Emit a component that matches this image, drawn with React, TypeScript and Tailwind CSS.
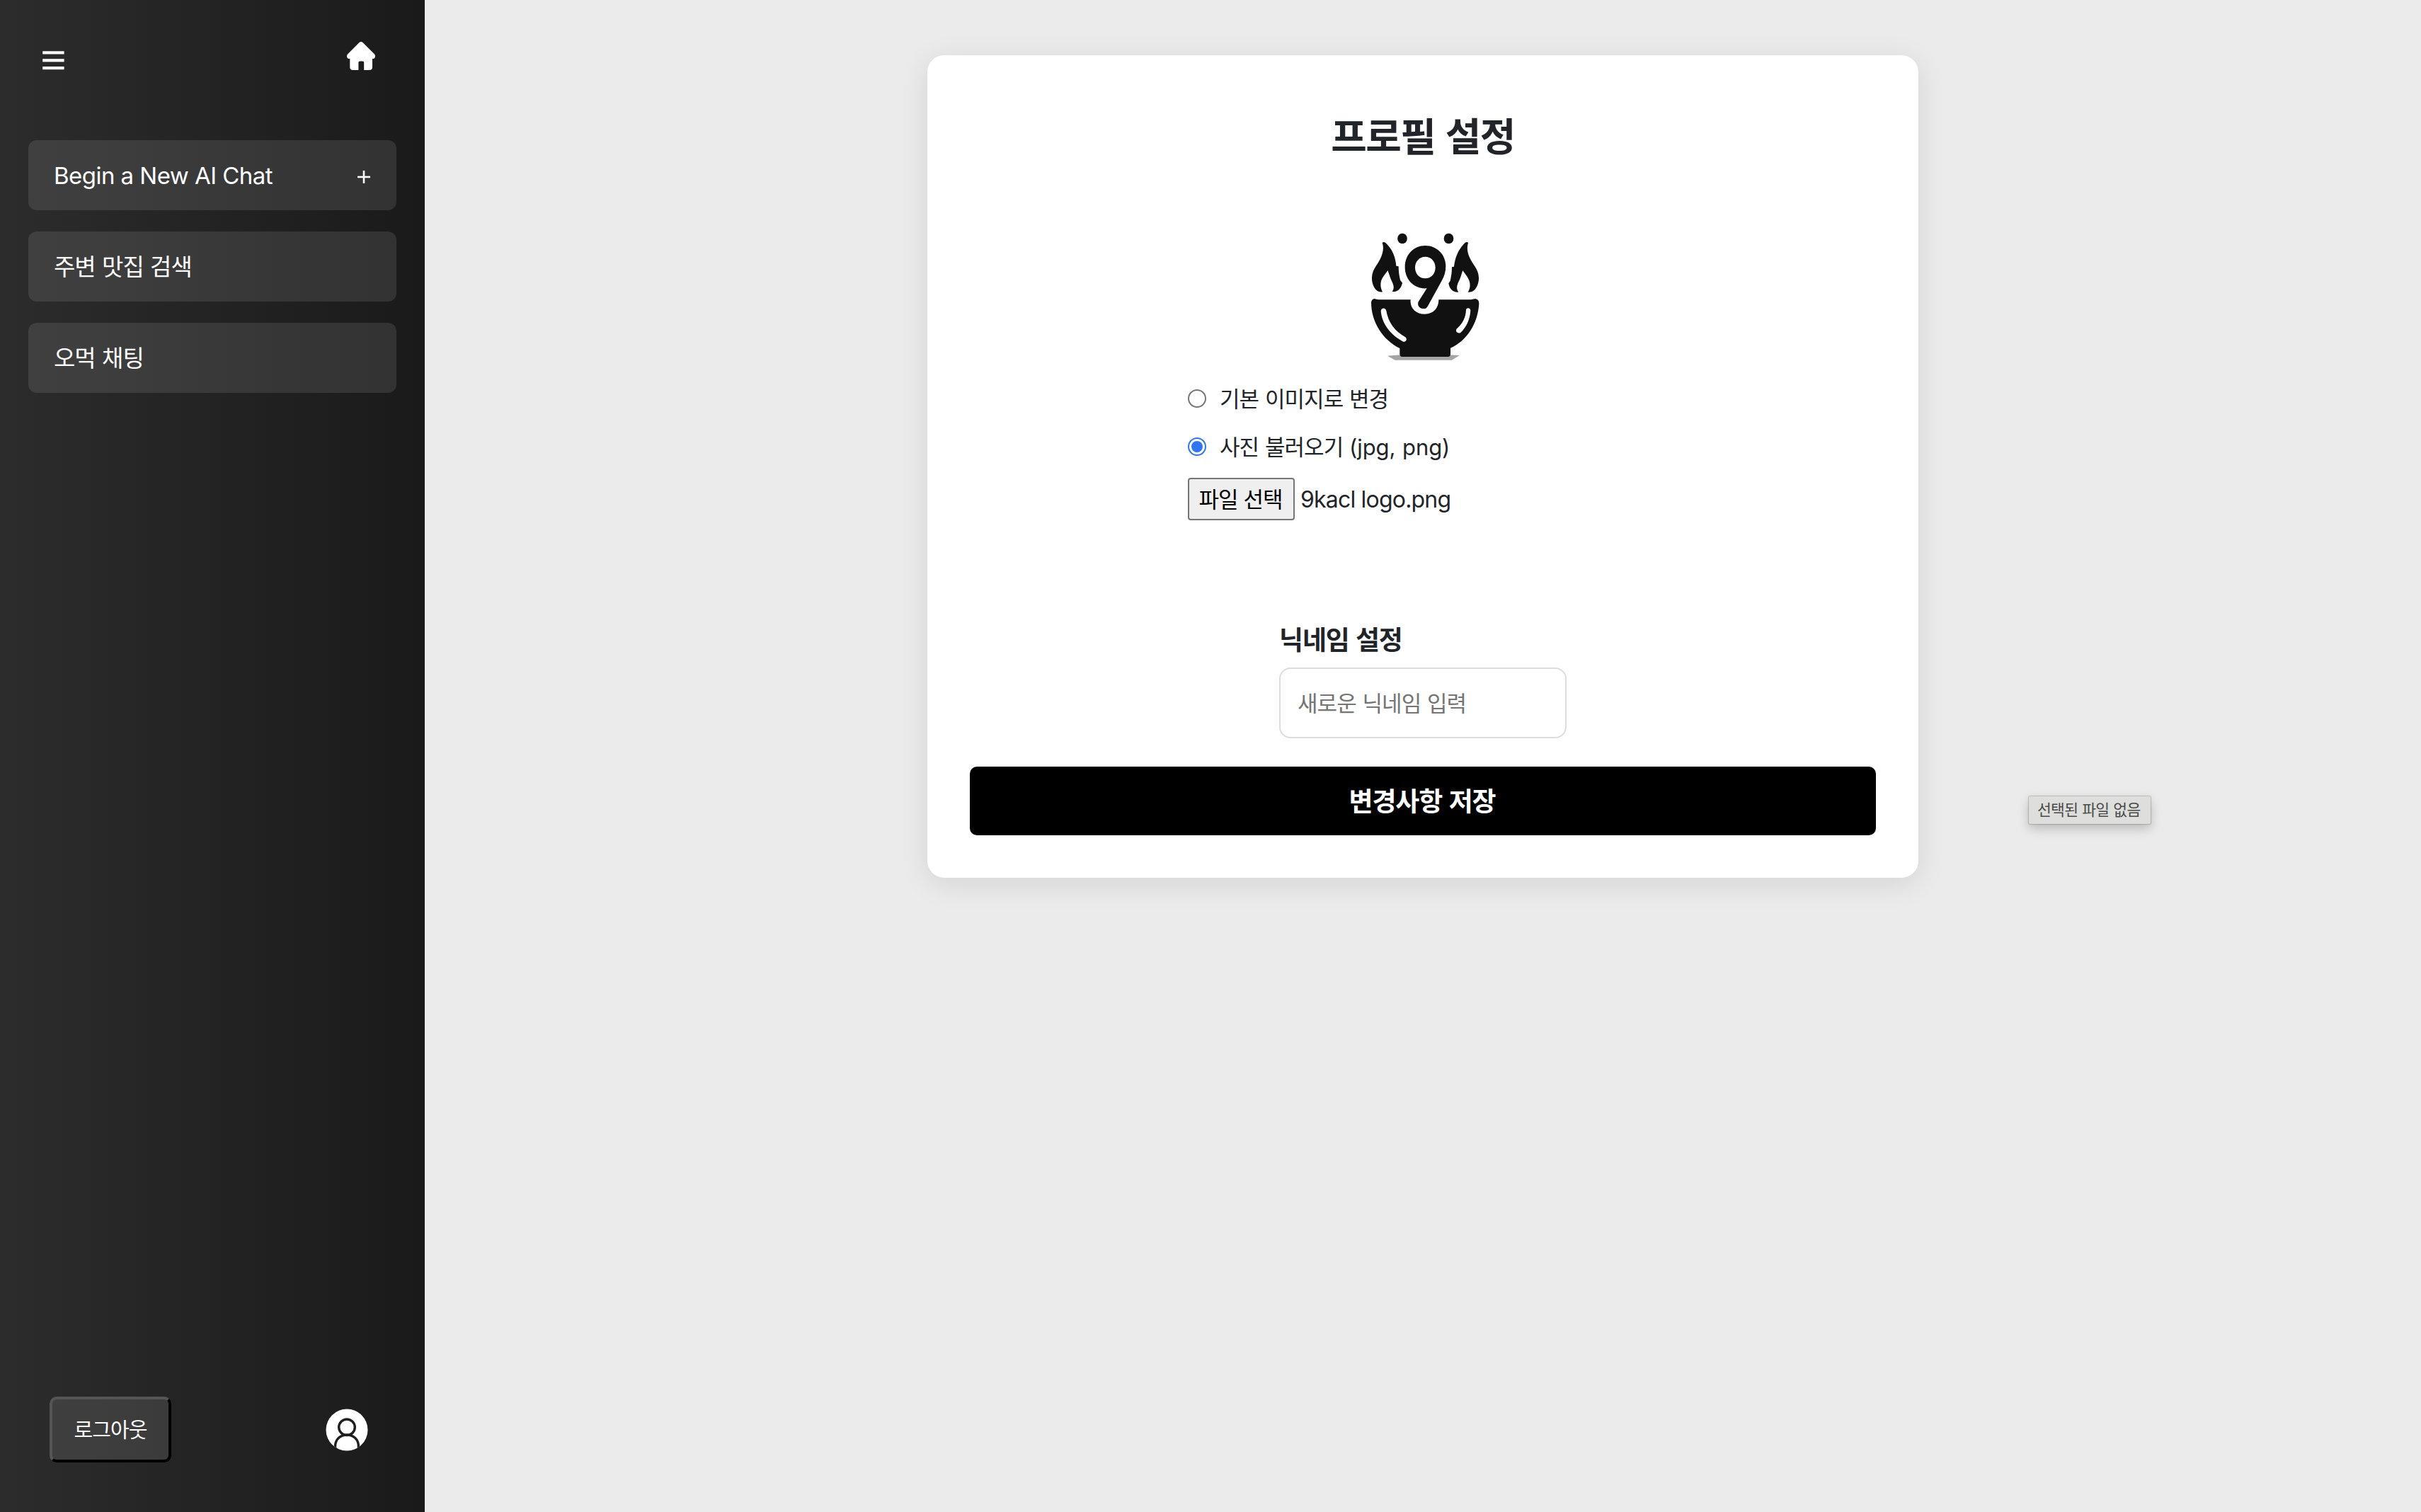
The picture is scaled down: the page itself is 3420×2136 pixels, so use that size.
import React from "react";

function MenuIcon() {
  return (
    <svg width="31" height="28" viewBox="0 0 31 28" fill="#fff">
      <rect x="0.2" y="0.3" width="30.4" height="4.2" />
      <rect x="0.2" y="11.2" width="30.4" height="4.2" />
      <rect x="0.2" y="22" width="30.4" height="4.2" />
    </svg>
  );
}

function HomeIcon() {
  return (
    <svg width="40" height="40" viewBox="0 0 40 40" fill="#fff">
      <path d="M17.6 1.1 Q20 -0.9 22.4 1.1 L39 17.6 Q40 18.8 40 20.4 Q40 24 36 24 L36 36 Q36 40 32 40 L24.2 40 L24.2 29.5 Q24.2 27.6 22.4 27.6 L18.2 27.6 Q16.4 27.6 16.4 29.5 L16.4 40 L8.5 40 Q4.3 40 4.3 36 L4.3 24 Q0 24 0 20.4 Q0 18.8 1.1 17.6 Z" />
    </svg>
  );
}

function UserIcon() {
  return (
    <svg width="60" height="60" viewBox="0 0 60 60">
      <defs>
        <clipPath id="avatar-disc">
          <circle cx="30" cy="30" r="29.5" />
        </clipPath>
      </defs>
      <circle cx="30" cy="30" r="29.5" fill="#fff" />
      <g clipPath="url(#avatar-disc)" fill="none" stroke="#1f1f1f" strokeWidth="3.4">
        <circle cx="30" cy="26.3" r="11.3" />
        <path d="M13.6 58 V53 C13.6 43 21 37 30 37 C39 37 46.4 43 46.4 53 V58" />
      </g>
    </svg>
  );
}

function BowlLogo() {
  return (
    <svg width="240" height="240" viewBox="0 0 720 720" fill="#111">
      <path d="M180 608 L236 604 H440 L486 606 L452 626 H212 Z" fill="#a5a3a4" />
      <ellipse cx="243" cy="111" rx="20.5" ry="22" />
      <ellipse cx="439.5" cy="111" rx="20.5" ry="22" />
      <path d="M158 129 C164 122 172 128 180 137 C203 162 214 191 217 227 L227 229 C227 249 229 266 234 287 L243 299 C238 322 224 338 200 336 C210 322 207 309 198 291 C190 276 188 262 181 246 C173 260 160 271 153 291 C149 309 152 323 159 337 C132 343 113 309 114 277 C115 239 141 221 154 187 C163 164 164 146 158 129 Z" />
      <path d="M522 129 C516 122 508 128 501 137 C478 162 466 194 462 230 L453 232 C453 252 451 269 446 290 L439 301 C443 326 459 341 481 338 C471 324 473 310 483 291 C491 276 493 262 499 246 C507 260 520 271 527 291 C532 309 530 324 521 338 C549 343 568 309 567 277 C566 239 540 221 526 187 C517 164 517 146 522 129 Z" />
      <path
        fillRule="evenodd"
        d="M340 141 C390 141 427 180 427 229 C427 252 421 270 411 288 L352 395 C346 406 341 409 332 408 C316 408 305 395 311 379 L347 322 C294 327 254 286 254 232 C254 180 291 141 340 141 Z M340 188 C315 188 297 208 297 234 C297 260 315 280 340 280 C365 280 383 260 383 234 C383 208 365 188 340 188 Z"
      />
      <path
        fillRule="evenodd"
        d="M124 366 Q133 369 142 370 L278 370 C274 405 300 431 338 431 C376 431 397 405 397 370 H534 L552 366 Q568 368 568 386 C564 470 516 545 447 575 V600 Q447 612 436 612 H243 Q232 612 232 600 V576 C160 540 112 466 111 383 Q111 370 124 366 Z M152 418 C156 472 193 520 247 548 C260 551 265 536 256 529 C213 505 183 467 175 417 C172 402 153 403 152 418 Z M513 413 C512 446 498 471 474 493 C465 505 478 516 490 510 C514 487 530 455 532 415 C530 403 515 403 513 413 Z"
      />
    </svg>
  );
}

function SideItem({ children, plus }: { children: React.ReactNode; plus?: boolean }) {
  return (
    <div className="flex h-[99px] items-center justify-between rounded-xl bg-white/10 pl-[36px] pr-[37px]">
      {children}
      {plus && (
        <svg width="18" height="18" viewBox="0 0 18 18" className="mt-[5px]" fill="#fff">
          <rect x="0" y="7.7" width="18" height="2.6" />
          <rect x="7.7" y="0" width="2.6" height="18" />
        </svg>
      )}
    </div>
  );
}

function Radio({ checked }: { checked?: boolean }) {
  return checked ? (
    <span className="flex size-[26px] items-center justify-center rounded-full border-2 border-[#3075f6]">
      <span className="size-[16px] rounded-full bg-[#3075f6]" />
    </span>
  ) : (
    <span className="size-[26px] rounded-full border-2 border-[#767676]" />
  );
}

export default function App() {
  return (
    <div className="relative flex h-[2136px] w-[3420px] overflow-hidden bg-[#ebebeb] font-['Inter','Noto_Sans_CJK_KR',sans-serif] text-[#212529]">
      <aside className="flex w-[600px] shrink-0 flex-col bg-[linear-gradient(90deg,#2c2c2c,#1a1a1a)] px-[40px] text-white">
        <div className="flex h-[198px] items-start justify-between pl-[20px] pr-[30px] pt-[59px]">
          <div className="pt-[13px]">
            <MenuIcon />
          </div>
          <HomeIcon />
        </div>
        <nav className="flex flex-col gap-[30px]">
          <SideItem plus>
            <span className="whitespace-nowrap pt-[2px] text-[33px] tracking-[-0.54px]">Begin a New AI Chat</span>
          </SideItem>
          <SideItem>
            <span className="whitespace-nowrap text-[33px] leading-[40px] tracking-[-0.03em] [word-spacing:0.03em]">주변 맛집 검색</span>
          </SideItem>
          <SideItem>
            <span className="whitespace-nowrap text-[33px] leading-[40px] tracking-[-0.03em] [word-spacing:0.03em]">오먹 채팅</span>
          </SideItem>
        </nav>
        <div className="mt-auto mb-[70px] flex items-center justify-between pl-[30px] pr-[40px]">
          <button className="flex h-[93px] w-[172px] items-center justify-center rounded-[10px] border-4 border-t-[#555] border-l-[#555] border-r-black border-b-black bg-white/10 pt-[2px] text-[29px] leading-[40px] tracking-[-0.03em]">
            로그아웃
          </button>
          <UserIcon />
        </div>
      </aside>

      <main className="flex flex-1 items-start justify-center pt-[78px]">
        <section className="flex h-[1162px] w-[1400px] flex-col items-center rounded-3xl bg-white px-[60px] shadow-[0_8px_40px_rgba(0,0,0,0.1)]">
          <h1 className="mt-[81px] h-[68px] whitespace-nowrap text-[55px] leading-[68px] font-bold tracking-[-0.028em] [word-spacing:0.05em]">프로필 설정</h1>
          <div className="mt-[73px] ml-[20px] h-[240px]">
            <BowlLogo />
          </div>
          <div className="mt-[-3px] w-[664px]">
            <label className="flex h-[52px] items-center gap-[19px]">
              <Radio />
              <span className="whitespace-nowrap pt-[2px] text-[31px] leading-[48px] tracking-[-0.03em] [word-spacing:0.03em]">기본 이미지로 변경</span>
            </label>
            <label className="mt-[16px] flex h-[52px] items-center gap-[19px]">
              <Radio checked />
              <span className="whitespace-nowrap pt-[2px] text-[31px] leading-[48px] tracking-[-0.03em] [word-spacing:0.03em]">
                사진 불러오기 <span className="tracking-[-0.002em]">(jpg, png)</span>
              </span>
            </label>
            <div className="mt-[18px] flex h-[60px] items-center gap-[8px]">
              <button className="flex h-[60px] w-[151px] items-center justify-center rounded-[4px] border-2 border-[#767676] bg-[#efefef] pt-[2px] pr-[2px] text-[31px] leading-[48px] tracking-[-0.03em] text-black">
                파일 선택
              </button>
              <span className="whitespace-nowrap pt-[2px] text-[32px] leading-[48px] tracking-[-0.025em]">9kacl logo.png</span>
            </div>
          </div>
          <div className="mt-[143px] flex w-[406px] flex-col">
            <span className="h-[52px] whitespace-nowrap pt-px text-[37px] leading-[52px] font-bold tracking-[-0.03em] [word-spacing:0.04em]">닉네임 설정</span>
            <div className="mt-[13px] flex h-[100px] items-center rounded-2xl border-2 border-[#ddd] pl-[24px]">
              <span className="whitespace-nowrap pt-[2px] text-[31px] leading-[48px] tracking-[-0.03em] text-[#757575] [word-spacing:0.03em]">새로운 닉네임 입력</span>
            </div>
          </div>
          <button className="mt-[40px] flex h-[97px] w-full items-center justify-center rounded-[10px] bg-black pt-[2px] pr-[2px] text-[37px] leading-[52px] font-bold tracking-[-0.03em] text-white [word-spacing:0.05em]">
            변경사항 저장
          </button>
        </section>
      </main>

      <div className="absolute left-[2866px] top-[1125px] flex h-[39px] w-[172px] items-center rounded-[2px] bg-[#dededd] pb-[2px] pl-[12px] text-[21.5px] leading-[30px] tracking-[-0.033em] text-[#4a4a4a] shadow-[0_0_1px_1px_rgba(0,0,0,0.18),0_6px_16px_rgba(0,0,0,0.22)] [word-spacing:0.03em]">
        <span className="whitespace-nowrap">선택된 파일 없음</span>
      </div>
    </div>
  );
}
